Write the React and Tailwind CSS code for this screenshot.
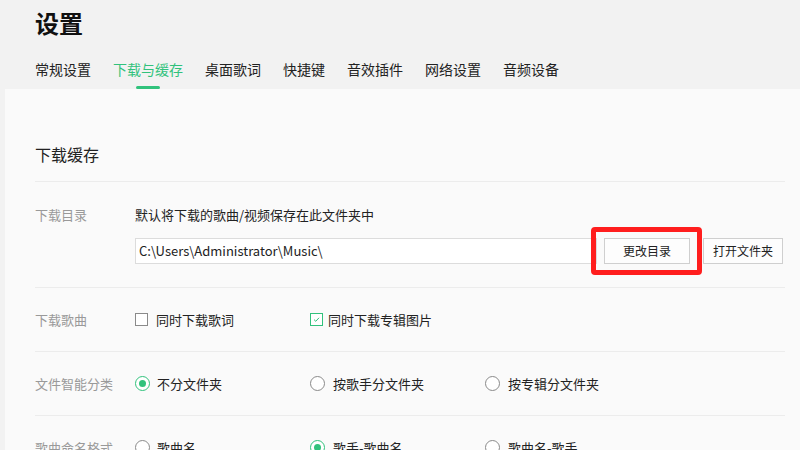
import React from "react";

const GREEN = "#31c27c";

function Tab({ label, active }) {
  return (
    <div className="flex flex-col items-center">
      <span className={`text-[14px] leading-[20px] ${active ? "text-[#31c27c]" : "text-[#222]"}`}>{label}</span>
      <span className={`mt-[7px] h-[3px] w-[24px] rounded-full ${active ? "bg-[#31c27c]" : "bg-transparent"}`} />
    </div>
  );
}

function Radio({ checked }) {
  return (
    <span
      className={`flex h-[15px] w-[15px] shrink-0 items-center justify-center rounded-full border ${
        checked ? "border-[#31c27c]" : "border-[#8a8a8a]"
      } bg-white`}
    >
      {checked && <span className="h-[7px] w-[7px] rounded-full bg-[#31c27c]" />}
    </span>
  );
}

function Check({ checked }) {
  return (
    <span
      className={`flex h-[13px] w-[13px] shrink-0 items-center justify-center border ${
        checked ? "border-[#31c27c]" : "border-[#8a8a8a]"
      } bg-white`}
    >
      {checked && (
        <svg width="9" height="9" viewBox="0 0 9 9" fill="none">
          <path d="M2 4.6 L3.8 6.3 L7 2.8" stroke={GREEN} strokeWidth="1" />
        </svg>
      )}
    </span>
  );
}

function Row({ label, children, className = "" }) {
  return (
    <div className={`flex border-b border-[#ececec] ${className}`}>
      <div className="w-[100px] shrink-0 text-[13px] leading-[20px] text-[#999]">{label}</div>
      <div className="flex-1">{children}</div>
    </div>
  );
}

function Opt({ children, gap = "gap-[7px]" }) {
  return <div className={`flex w-[175px] items-center ${gap} text-[13px] leading-[20px] text-[#222]`}>{children}</div>;
}

export default function App() {
  return (
    <div
      className="h-[450px] w-[800px] overflow-hidden bg-[#f2f2f2]"
      style={{ fontFamily: '"Noto Sans CJK SC", "Noto Sans", sans-serif' }}
    >
      <header className="h-[89px] pl-[35px] pt-[11px]">
        <h1 className="text-[24px] font-bold leading-[24px] text-[#111]">设置</h1>
        <nav className="mt-[24px] flex gap-[22px]">
          <Tab label="常规设置" />
          <Tab label="下载与缓存" active />
          <Tab label="桌面歌词" />
          <Tab label="快捷键" />
          <Tab label="音效插件" />
          <Tab label="网络设置" />
          <Tab label="音频设备" />
        </nav>
      </header>
      <main className="ml-[5px] h-[361px] bg-[#fafafa] pl-[30px] pr-[15px]">
        <div className="border-b border-[#ececec] pb-[15px] pt-[53px] text-[16px] leading-[24px] text-[#222]">
          下载缓存
        </div>
        <Row label="下载目录" className="pb-[23px] pt-[23px]">
          <div className="text-[13px] leading-[20px] text-[#222]">默认将下载的歌曲/视频保存在此文件夹中</div>
          <div className="mt-[12px] flex items-center">
            <div className="flex h-[26px] w-[462px] items-center border border-[#dcdcdc] bg-white pl-[3px] text-[13px] text-[#222]">
              C:\Users\Administrator\Music\
            </div>
            <div className="relative ml-[7px]">
              <button className="h-[26px] w-[86px] border border-[#cfcfcf] bg-[#fdfdfd] text-[12px] text-[#222]">
                更改目录
              </button>
              <div className="pointer-events-none absolute -bottom-[11px] -left-[13px] -right-[12px] -top-[10px] rounded-[4px] border-[5px] border-[#ff1e1e]" />
            </div>
            <button className="ml-[13px] h-[26px] w-[80px] border border-[#cfcfcf] bg-[#fdfdfd] text-[12px] text-[#222]">
              打开文件夹
            </button>
          </div>
        </Row>
        <Row label="下载歌曲" className="h-[64px] items-center">
          <div className="flex">
            <Opt gap="gap-[8px]">
              <Check />
              <span>同时下载歌词</span>
            </Opt>
            <Opt gap="gap-[5px]">
              <Check checked />
              <span>同时下载专辑图片</span>
            </Opt>
          </div>
        </Row>
        <Row label="文件智能分类" className="h-[64px] items-center">
          <div className="flex">
            <Opt>
              <Radio checked />
              <span>不分文件夹</span>
            </Opt>
            <Opt gap="gap-[8px]">
              <Radio />
              <span>按歌手分文件夹</span>
            </Opt>
            <Opt gap="gap-[8px]">
              <Radio />
              <span>按专辑分文件夹</span>
            </Opt>
          </div>
        </Row>
        <Row label="歌曲命名格式" className="h-[64px] items-center">
          <div className="flex">
            <Opt>
              <Radio />
              <span>歌曲名</span>
            </Opt>
            <Opt gap="gap-[8px]">
              <Radio checked />
              <span>歌手-歌曲名</span>
            </Opt>
            <Opt gap="gap-[8px]">
              <Radio />
              <span>歌曲名-歌手</span>
            </Opt>
          </div>
        </Row>
      </main>
    </div>
  );
}
